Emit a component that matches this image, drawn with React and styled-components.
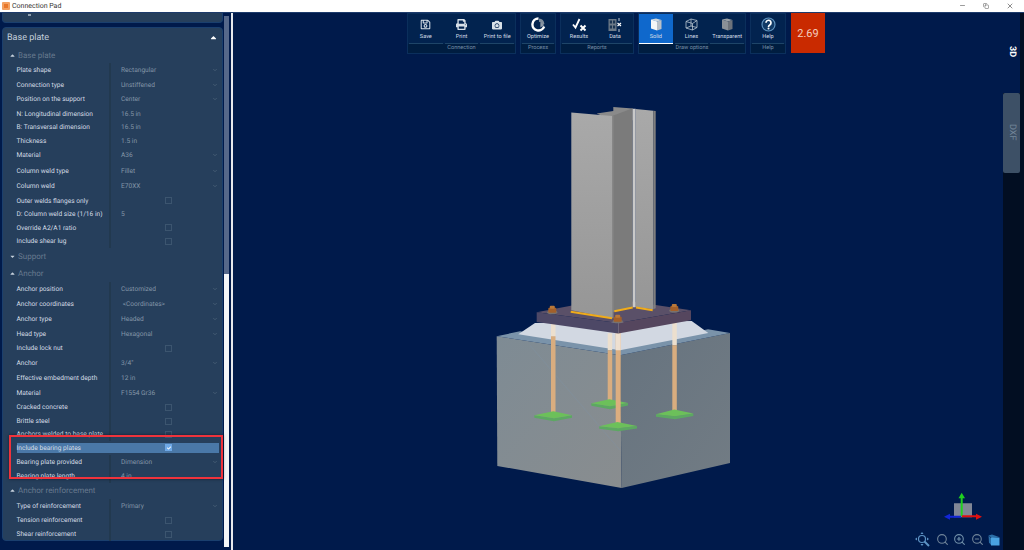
import React from 'react'
import styled, { createGlobalStyle } from 'styled-components'
import { FaRegSave, FaPrint, FaCamera, FaCheck, FaCaretUp, FaCaretDown } from 'react-icons/fa'
import { ChevronDown, ZoomIn, ZoomOut, Search, Minus, X, Copy } from 'lucide-react'

const GlobalStyle = createGlobalStyle`
    html, body { margin: 0; padding: 0; height: 100%; overflow: hidden; background: #001a4b; }
    * { box-sizing: border-box; }
    #root { height: 100%; font-family: Roboto, "Noto Sans", sans-serif; text-rendering: geometricPrecision; }
`

const basePlate = [
    { label: 'Plate shape', value: 'Rectangular', kind: 'select', h: 14.5 },
    { label: 'Connection type', value: 'Unstiffened', kind: 'select', h: 14.5 },
    { label: 'Position on the support', value: 'Center', kind: 'select', h: 14.5 },
    { label: 'N: Longitudinal dimension', value: '16.5 in', h: 14 },
    { label: 'B: Transversal dimension', value: '16.5 in', h: 13 },
    { label: 'Thickness', value: '1.5 in', h: 14 },
    { label: 'Material', value: 'A36', kind: 'select', h: 15 },
    { label: 'Column weld type', value: 'Fillet', kind: 'select', h: 16 },
    { label: 'Column weld', value: 'E70XX', kind: 'select', h: 15 },
    { label: 'Outer welds flanges only', kind: 'check', h: 14 },
    { label: 'D: Column weld size (1/16 in)', value: '5', h: 13.5 },
    { label: 'Override A2/A1 ratio', kind: 'check', h: 13.5 },
    { label: 'Include shear lug', kind: 'check', h: 13.5 },
]

const anchor = [
    { label: 'Anchor position', value: 'Customized', kind: 'select', h: 15 },
    { label: 'Anchor coordinates', value: ' <Coordinates>', kind: 'select', h: 15 },
    { label: 'Anchor type', value: 'Headed', kind: 'select', h: 15.5 },
    { label: 'Head type', value: 'Hexagonal', kind: 'select', h: 14 },
    { label: 'Include lock nut', kind: 'check', h: 14 },
    { label: 'Anchor', value: '3/4"', kind: 'select', h: 15.5 },
    { label: 'Effective embedment depth', value: '12 in', h: 15 },
    { label: 'Material', value: 'F1554 Gr36', kind: 'select', h: 14.5 },
    { label: 'Cracked concrete', kind: 'check', h: 14.5 },
    { label: 'Brittle steel', kind: 'check', h: 13 },
    { label: 'Anchors welded to base plate', kind: 'check', h: 13 },
]

const bearing = [
    { label: 'Include bearing plates', kind: 'check', checked: true, active: true, h: 14 },
    { label: 'Bearing plate provided', value: 'Dimension', kind: 'select', h: 14 },
    { label: 'Bearing plate length', value: '4 in', h: 14 },
]

const reinforcement = [
    { label: 'Type of reinforcement', value: 'Primary', kind: 'select', h: 15 },
    { label: 'Tension reinforcement', kind: 'check', h: 13.5 },
    { label: 'Shear reinforcement', kind: 'check', h: 14 },
]

const groups = [
    { title: 'Connection', width: 109, buttons: [
        { label: 'Save', icon: <FaRegSave size={11} color="#d8e0e8" /> },
        { label: 'Print', icon: <FaPrint size={11} color="#d8e0e8" /> },
        { label: 'Print to file', icon: <FaCamera size={10} color="#d8e0e8" /> },
    ] },
    { title: 'Process', width: 36, buttons: [{ label: 'Optimize', icon: <OptimizeIcon /> }] },
    { title: 'Reports', width: 74, buttons: [
        { label: 'Results', icon: <ResultsIcon /> },
        { label: 'Data', icon: <DataIcon /> },
    ] },
    { title: 'Draw options', width: 108, buttons: [
        { label: 'Solid', icon: <CubeIcon />, selected: true },
        { label: 'Lines', icon: <WireIcon /> },
        { label: 'Transparent', icon: <CubeIcon dim /> },
    ] },
    { title: 'Help', width: 36, buttons: [{ label: 'Help', icon: <HelpIcon /> }] },
]

function HelpIcon() {
    return (
        <svg width="15" height="15" viewBox="0 0 15 15">
            <circle cx="7.5" cy="7.5" r="6.5" fill="#113a66" stroke="#5f93bf" strokeWidth="1.2" />
            <path d="M5 5.8a2.5 2.500 0 1 1 3.800 2.100c-.9.600-1.300 1-1.300 2" fill="none" stroke="#fff" strokeWidth="1.700" />
            <circle cx="7.500" cy="11.600" r="1" fill="#fff" />
        </svg>
    )
}

function OptimizeIcon() {
    return (
        <svg width="15" height="15" viewBox="0 0 15 15">
            <path d="M7.5 1.5a6 6 0 1 0 5.6 8" fill="none" stroke="#fff" strokeWidth="2.4" />
            <path d="M8 1.6a6 6 0 0 1 5.4 5.4l-3 .3A3 3 0 0 0 8 4.8z" fill="#7f8d9c" />
            <path d="M9.4 5.5l4 2.5-4 2.5z" fill="#8e9aa8" />
        </svg>
    )
}

function ResultsIcon() {
    return (
        <svg width="15" height="14" viewBox="0 0 15 14" fill="none">
            <path d="M1 6.5l2.5 3L7.5 1" stroke="#fff" strokeWidth="1.8" />
            <path d="M8.5 7.5l5 5M13.5 7.5l-5 5" stroke="#fff" strokeWidth="2" />
        </svg>
    )
}

function DataIcon() {
    return (
        <svg width="15" height="14" viewBox="0 0 15 14" fill="none">
            <path d="M0.5 1h8v12h-8z" fill="#6d7a88" />
            <path d="M1.8 2.5h2.2v3H1.800zM5 2.500h2.200v3H5zM1.800 7.500h2.200v3H1.800zM5 7.500h2.200v3H5z" fill="#1c3553" />
            <path d="M11 0v3M11 11v3" stroke="#c5ced8" strokeWidth="1" />
            <path d="M9.500 5l3.500 3M13 5L9.500 8" stroke="#fff" strokeWidth="1.200" />
        </svg>
    )
}

function CubeIcon({ dim }) {
    return (
        <svg width="12" height="13" viewBox="0 0 12 13">
            <path d="M1 1.500L6 0.500 11.500 2 7 3.500z" fill={dim ? '#9aa0a6' : '#cfd6dc'} />
            <path d="M1 1.500L7 3.500V12.500L1 10.500z" fill={dim ? '#8a9097' : '#f4f5f6'} />
            <path d="M7 3.500L11.500 2V11L7 12.500z" fill={dim ? '#6d737b' : '#b9c0c8'} />
        </svg>
    )
}

function WireIcon() {
    return (
        <svg width="13" height="13" viewBox="0 0 13 13" fill="none" stroke="#b9c5d1" strokeWidth="0.8">
            <path d="M1 3.500L6 1 12 2.500V9.500L7.500 12 1 10z" />
            <path d="M1 3.500L7.500 5.500 12 2.500M7.500 5.500V12M6 1V8L1 10M6 8L12 9.500" />
        </svg>
    )
}

function PropertyRow({ label, value, kind, checked, active, h }) {
    return (
        <Row $h={h} $active={active}>
            <Label $active={active}>{label}</Label>
            <ValueCell>
                {kind === 'check' ? (
                    <CheckBox $checked={checked}>{checked && <FaCheck size={4} color="#fff" />}</CheckBox>
                ) : (
                    <Value>{value}</Value>
                )}
                {kind === 'select' && <ChevronDown size={6} color="#5f7488" strokeWidth={2} />}
            </ValueCell>
        </Row>
    )
}

function Section({ title, h, open = true, rows }) {
    return (
        <>
            <SectionHead $h={h}>
                <CaretSlot>{open ? <FaCaretUp size={7} color="#c6d1dc" /> : <FaCaretDown size={7} color="#c6d1dc" />}</CaretSlot>
                <span>{title}</span>
            </SectionHead>
            {rows && rows.map(row => <PropertyRow key={row.label} {...row} />)}
        </>
    )
}

function GreenPlate({ l, b, r, f }) {
    const t = 3
    const top = [l, b, r, [f[0], f[1] - t]].map(p => p.join(',')).join(' ')
    const side = [l, [l[0], l[1] + 2.5], f, [r[0], r[1] + 2.5], r, [f[0], f[1] - t]].map(p => p.join(',')).join(' ')
    return (
        <g>
            <polygon points={side} fill="#5ca862" />
            <polygon points={top} fill="#6cc05a" />
        </g>
    )
}

function Nut({ x, y }) {
    return (
        <g>
            <ellipse cx={x} cy={y + 3} rx="5" ry="2" fill="#77726f" />
            <rect x={x - 4} y={y - 1.5} width="8" height="5" rx="1" fill="#a3602a" />
            <rect x={x - 2.5} y={y - 3.5} width="5" height="3" rx="1" fill="#b8783a" />
        </g>
    )
}

function Scene() {
    const rods = [
        { x: 553, y0: 323, y1: 413, join: 336 },
        { x: 609.7, y0: 333, y1: 400, join: 350 },
        { x: 674.3, y0: 322, y1: 412, join: 345 },
    ]
    return (
        <SceneSvg viewBox="233 13 770 537">
            <defs>
                <linearGradient id="flange" x1="0" y1="0" x2="0" y2="1">
                    <stop offset="0" stopColor="#a9a9a9" />
                    <stop offset="1" stopColor="#969696" />
                </linearGradient>
                <linearGradient id="leftFace" x1="0" y1="0" x2="1" y2="1">
                    <stop offset="0" stopColor="#7e8b94" />
                    <stop offset="1" stopColor="#898d8f" />
                </linearGradient>
                <linearGradient id="rightFace" x1="0" y1="0" x2="1" y2="1">
                    <stop offset="0" stopColor="#66737f" />
                    <stop offset="1" stopColor="#727c84" />
                </linearGradient>
            </defs>

            <polygon points="496.700,336 620,355 621.700,487.700 497.300,465.700" fill="url(#leftFace)" />
            <polygon points="620,355 730,332.700 730,462.700 621.700,487.700" fill="url(#rightFace)" />
            <polygon points="496.700,336 520,331 620,348 708,329 730,332.700 620,355" fill="#7a93aa" />
            <path d="M530 345L620 450" stroke="#7e93a5" strokeOpacity="0.35" strokeWidth="1" />
            <polygon points="535,322.700 518.300,334 620,350 708.300,332.700 691.700,320.700" fill="#d2d8e2" />

            {rods.map(r => (
                <g key={r.x}>
                    <rect x={r.x - 2} y={r.y0} width="4.500" height={r.join - r.y0} fill="#ecdfce" />
                    <rect x={r.x - 2} y={r.join} width="4.500" height={r.y1 - r.join} fill="#d9ad7f" />
                </g>
            ))}
            <GreenPlate l={[534.3, 415]} b={[553.3, 411]} r={[572, 415]} f={[554, 421]} />
            <GreenPlate l={[591.3, 403]} b={[609.3, 399]} r={[628, 402.7]} f={[610, 409]} />
            <GreenPlate l={[656, 414]} b={[674.3, 409.3]} r={[693.3, 413.3]} f={[675, 419]} />
            <rect x="615.700" y="333" width="5" height="90" fill="#dcae7f" />
            <rect x="615.700" y="333" width="5" height="17" fill="#efe0d0" />
            <GreenPlate l={[599.3, 426]} b={[617.3, 421.7]} r={[637, 425.7]} f={[618.3, 431]} />

            <polygon points="536.700,312 610,298 691,310 618.300,322.700" fill="#5a5068" />
            <polygon points="536.700,312 618.300,322.700 618.300,333.300 536.700,321.700" fill="#4d4866" />
            <polygon points="618.300,322.700 691,310 691,320 618.300,333.300" fill="#55465e" />

            <polygon points="596.700,113.300 613.300,110.700 613.300,106.700 632.700,108.300 632.700,120 612,120" fill="#8a8a8a" />
            <polygon points="612,115.700 632.700,108 632.700,307 612,312" fill="#7b7b7b" />
            <polygon points="571.300,112.300 612,115.700 612,318 571.300,310" fill="url(#flange)" />
            <polygon points="612,115.700 613.500,115.500 613.500,318 612,318" fill="#878787" />
            <rect x="632.700" y="108.500" width="3" height="198.500" fill="#c9c9c9" />
            <polygon points="635.700,108.700 653.300,110.500 653.300,309 635.700,306.700" fill="url(#flange)" />
            <polygon points="653.300,110.500 655.700,110.700 655.700,308 653.300,309" fill="#7e7e7e" />

            <path d="M570.700 311.500L612 318M614.300 311L632.700 307.300M636 307.300L652.700 310" stroke="#f0ac1a" strokeWidth="2" fill="none" />

            <Nut x={552.3} y={309} />
            <Nut x={674.3} y={307.3} />
            <Nut x={617.7} y={318} />

            {/* orientation widget */}
            <rect x="954" y="503" width="18" height="14" fill="#8f939e" opacity="0.9" />
            <path d="M961.700 516V497" stroke="#1fd11f" strokeWidth="2" />
            <polygon points="961.700,492.500 958.500,498 965,498" fill="#1fd11f" />
            <path d="M962 516H977" stroke="#e01010" strokeWidth="2" />
            <polygon points="982,516.500 976,513.500 976,519.500" fill="#e01010" />
            <path d="M961 516.500H949" stroke="#1226d8" strokeWidth="2" />
            <polygon points="944,516.500 950,513.500 950,519.500" fill="#1226d8" />
        </SceneSvg>
    )
}

export default function App() {
    return (
        <Window>
            <GlobalStyle />
            <TitleBar>
                <AppIcon />
                <TitleText>Connection Pad</TitleText>
                <WindowControls>
                    <Minus size={7} />
                    <Copy size={6} />
                    <X size={8} />
                </WindowControls>
            </TitleBar>
            <Body>
                <Sidebar>
                    <PanelColumn>
                        <ClippedCard>
                            <ClippedMark />
                        </ClippedCard>
                        <Card>
                            <CardHead>
                                <span>Base plate</span>
                                <FaCaretUp size={9} color="#fff" />
                            </CardHead>
                            <Section title="Base plate" h={15.5} rows={basePlate} />
                            <Section title="Support" h={17} open={false} />
                            <Section title="Anchor" h={16.5} rows={anchor} />
                            <Callout>
                                {bearing.map(row => <PropertyRow key={row.label} {...row} />)}
                            </Callout>
                            <Section title="Anchor reinforcement" h={16} rows={reinforcement} />
                        </Card>
                    </PanelColumn>
                    <ScrollTrack>
                        <ScrollThumb />
                    </ScrollTrack>
                </Sidebar>
                <Splitter />
                <Stage>
                    <Scene />
                    <Toolbar>
                        {groups.map(group => (
                            <Group key={group.title} $w={group.width}>
                                <ButtonRow>
                                    {group.buttons.map(btn => (
                                        <ToolButton key={btn.label} $selected={btn.selected}>
                                            <IconSlot>{btn.icon}</IconSlot>
                                            <ToolLabel>{btn.label}</ToolLabel>
                                        </ToolButton>
                                    ))}
                                </ButtonRow>
                                <GroupLabel>{group.title}</GroupLabel>
                            </Group>
                        ))}
                        <Score>2.69</Score>
                    </Toolbar>
                    <ViewIcons>
                        <svg width="16" height="15" viewBox="0 0 16 15" fill="none" stroke="#5c92c4" strokeWidth="1.200">
                            <circle cx="7" cy="7" r="3.500" />
                            <path d="M9.500 9.500L14 14" strokeWidth="2" />
                            <path d="M7 0l-1.500 2h3zM7 14l-1.500-2h3zM0 7l2-1.500v3zM14 7l-2-1.500v3z" fill="#5c92c4" stroke="none" />
                        </svg>
                        <Search size={13} color="#6f8499" />
                        <ZoomIn size={13} color="#6f8fa9" />
                        <ZoomOut size={13} color="#6f8499" />
                        <svg width="12" height="12" viewBox="0 0 12 12">
                            <path d="M0.500 1.500L4 0.500 11 3 4 4z" fill="#2b6fa8" />
                            <path d="M0.500 1.500L3 4V11L1 8.500z" fill="#2b6fa8" />
                            <path d="M3 3.500H11.500V11.500H3z" fill="#4aa3e2" />
                        </svg>
                    </ViewIcons>
                </Stage>
                <RightRail>
                    <RailTop>
                        <ThreeD>3D</ThreeD>
                    </RailTop>
                    <DxfTab>DXF</DxfTab>
                </RightRail>
            </Body>
        </Window>
    )
}

const Window = styled.div`
    height: 550px;
    width: 1024px;
    display: flex;
    flex-direction: column;
    overflow: hidden;
`

const TitleBar = styled.div`
    height: 12.5px;
    background: #fff;
    display: flex;
    align-items: center;
    padding-left: 2px;
    flex: none;
    border-bottom: 1px solid #1d3b6c;
`

const AppIcon = styled.div`
    width: 8px;
    height: 8px;
    background: #e8772a;
    border: 2px solid #f3a060;
    border-radius: 1px;
`

const TitleText = styled.span`
    margin-left: 2px;
    font-size: 7px;
    color: #333;
`

const WindowControls = styled.div`
    margin-left: auto;
    width: 55.5px;
    margin-right: 10px;
    display: flex;
    justify-content: space-between;
    align-items: center;
    color: #555;
`

const Body = styled.div`
    flex: 1;
    display: flex;
    min-height: 0;
    background: #001a4b;
`

const Sidebar = styled.aside`
    width: 231px;
    flex: none;
    display: flex;
    overflow: hidden;
`

const PanelColumn = styled.div`
    width: 224px;
    padding: 0 1px 0 2px;
    flex: none;
`

const ClippedCard = styled.div`
    height: 10px;
    background: #263f5c;
    border: 1px solid #1a3f6e;
    border-top: none;
    border-radius: 0 0 4px 4px;
    margin-bottom: 4.5px;
    padding: 1px 0 0 25px;
`

const ClippedMark = styled.div`
    width: 3px;
    height: 2px;
    background: #8f9fb0;
`

const Card = styled.section`
    background: #263f5c;
    border: 1px solid #1a3f6e;
    border-radius: 4px;
    height: 514px;
`

const CardHead = styled.div`
    height: 19.5px;
    padding: 0 4px;
    display: flex;
    align-items: center;
    justify-content: space-between;
    font-size: 9px;
    color: #c3ced9;
`

const SectionHead = styled.div`
    height: ${p => p.$h}px;
    display: flex;
    align-items: center;
    padding-left: 6px;
    font-size: 8px;
    color: #66798e;
`

const CaretSlot = styled.span`
    width: 9px;
    display: flex;
    align-items: center;
`

const Row = styled.div`
    height: ${p => p.$h}px;
    display: grid;
    grid-template-columns: 94.5px 1fr;
    margin: 0 3px 0 13.5px;
    align-items: stretch;
    ${p => p.$active && `
        padding: 2px 0;
        background: #4a78a8;
        background-clip: content-box;
    `}
`

const Label = styled.div`
    font-size: 6.6px;
    color: #d5dde6;
    white-space: nowrap;
    display: flex;
    align-items: center;
    border-right: 2px solid ${p => (p.$active ? 'transparent' : '#22394f')};
`

const ValueCell = styled.div`
    display: flex;
    align-items: center;
    justify-content: space-between;
    padding: 0 1px 0 10px;
`

const Value = styled.span`
    font-size: 6.6px;
    color: #8496a8;
    white-space: pre;
`

const CheckBox = styled.span`
    width: 7px;
    height: 7px;
    margin-left: 44px;
    border: 1px solid ${p => (p.$checked ? '#6ea8e6' : '#3c556f')};
    background: ${p => (p.$checked ? '#6ea8e6' : 'transparent')};
    display: flex;
    align-items: center;
    justify-content: center;
`

const Callout = styled.div`
    position: relative;
    &::after {
        content: '';
        position: absolute;
        left: 6px;
        right: -1px;
        top: -5.5px;
        bottom: 4px;
        border: 2px solid #ef333c;
        box-shadow: 0 0 3px rgba(0, 0, 0, 0.5);
        pointer-events: none;
    }
`

const ScrollTrack = styled.div`
    width: 5px;
    margin-top: 3px;
    margin-bottom: 3px;
    background: #56688a;
    display: flex;
    flex-direction: column;
    justify-content: flex-end;
`

const ScrollThumb = styled.div`
    height: 273px;
    background: #f4f6f8;
`

const Splitter = styled.div`
    width: 2px;
    flex: none;
    background: #e6e9ee;
`

const Stage = styled.main`
    flex: 1;
    position: relative;
    padding: 0.5px 0 0 174px;
`

const SceneSvg = styled.svg`
    position: absolute;
    inset: 0;
    width: 100%;
    height: 100%;
`

const Toolbar = styled.div`
    position: relative;
    display: flex;
    align-items: flex-start;
    gap: 4px;
`

const Group = styled.div`
    width: ${p => p.$w}px;
    background: #02234f;
    border: 1px solid #0b2f5c;
    display: flex;
    flex-direction: column;
`

const ButtonRow = styled.div`
    display: flex;
    height: 29.5px;
`

const ToolButton = styled.div`
    flex: 1;
    min-width: 0;
    display: flex;
    flex-direction: column;
    align-items: center;
    border-bottom: 1px solid ${p => (p.$selected ? '#fff' : '#1e4568')};
    margin: ${p => (p.$selected ? '0 1px 0 0' : '0 1px')};
    background: ${p => (p.$selected ? '#0f68cc' : 'transparent')};
`

const IconSlot = styled.div`
    height: 19px;
    display: flex;
    align-items: center;
    justify-content: center;
    padding-top: 2px;
`

const ToolLabel = styled.span`
    font-size: 5.6px;
    color: #d6dee7;
    white-space: nowrap;
    line-height: 8px;
`

const GroupLabel = styled.div`
    height: 9.5px;
    background: #001d40;
    font-size: 5.6px;
    line-height: 9.5px;
    color: #7890a8;
    text-align: center;
`

const Score = styled.div`
    width: 34px;
    height: 40px;
    background: #c92a00;
    color: #f3cdbf;
    font-size: 11px;
    display: flex;
    align-items: center;
    justify-content: center;
    margin-left: 1px;
`

const ViewIcons = styled.div`
    position: absolute;
    right: 3px;
    bottom: 3px;
    display: flex;
    align-items: center;
    gap: 4.5px;
`

const RightRail = styled.div`
    width: 21px;
    flex: none;
    display: flex;
    flex-direction: column;
    background: #020e22;
`

const RailTop = styled.div`
    height: 80px;
    border-right: 4px solid #020e22;
    background: #001a4b;
    display: flex;
    justify-content: center;
    padding-top: 33.5px;
`

const ThreeD = styled.span`
    writing-mode: vertical-rl;
    font-size: 9px;
    font-weight: 700;
    color: #fff;
    line-height: 8px;
    height: 13px;
`

const DxfTab = styled.div`
    width: 17px;
    height: 80px;
    background: #3d5066;
    border-radius: 2px;
    writing-mode: vertical-rl;
    font-size: 9px;
    color: #75889b;
    display: flex;
    align-items: center;
    justify-content: flex-start;
    padding-top: 31px;
`
